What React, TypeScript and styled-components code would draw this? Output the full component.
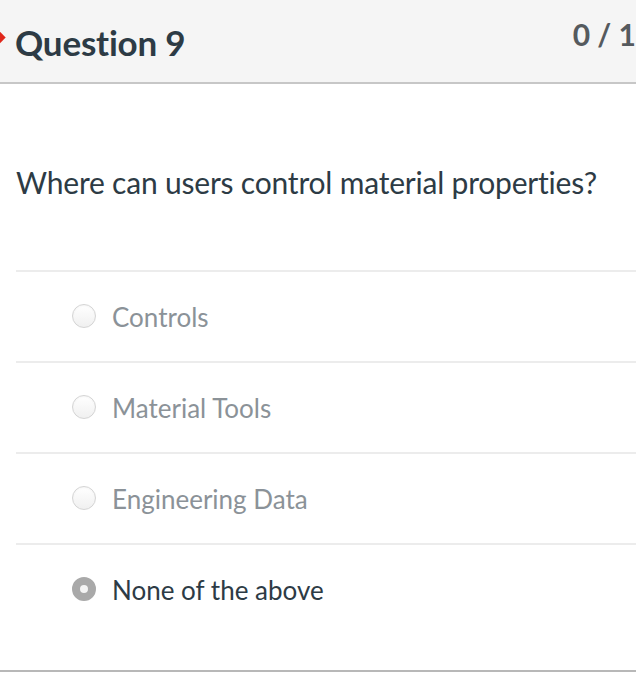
import * as React from 'react';
import styled, { createGlobalStyle } from 'styled-components';

const GlobalStyle = createGlobalStyle`
  html, body {
    margin: 0;
    padding: 0;
    background: #ffffff;
    overflow: hidden;
  }
  body {
    font-family: Lato, "Liberation Sans", sans-serif;
    color: #2d3b45;
  }
`;

const Page = styled.div`
  width: 636px;
  height: 700px;
  overflow: hidden;
`;

const Header = styled.div`
  display: flex;
  align-items: flex-start;
  height: 82px;
  background: #f5f5f5;
  border-bottom: 2px solid #c7c7c7;
`;

const Marker = styled.span`
  flex-shrink: 0;
  width: 13px;
  height: 13px;
  margin: 31px 0 0 -10px;
  background: #e0271b;
  transform: rotate(45deg);
`;

const Title = styled.h2`
  flex: 1;
  margin: 18px 0 0 12px;
  font-size: 35px;
  font-weight: 700;
  line-height: 48px;
  color: #2d3b45;
  letter-spacing: -0.2px;
`;

const Points = styled.div`
  flex-shrink: 0;
  margin: 12px 0 0 0;
  font-size: 30px;
  font-weight: 700;
  line-height: 44px;
  color: #555a5e;
  white-space: nowrap;
`;

const Body = styled.div`
  padding: 0 0 0 16px;
  border-bottom: 2px solid #b8b8b8;
`;

const Prompt = styled.p`
  margin: 0;
  padding: 77px 0 67px;
  font-size: 30px;
  line-height: 42px;
  letter-spacing: -0.2px;
  color: #2d3b45;
`;

const AnswerList = styled.div`
  display: flex;
  flex-direction: column;
  padding-bottom: 36px;
`;

const Answer = styled.label`
  display: flex;
  align-items: center;
  gap: 16px;
  height: 89px;
  padding-left: 56px;
  border-top: 2px solid #ececec;
`;

const Radio = styled.span<{ $checked?: boolean }>`
  flex-shrink: 0;
  box-sizing: border-box;
  width: 24px;
  height: 24px;
  margin-top: -2px;
  border-radius: 50%;
  border: ${(p) => (p.$checked ? '8px solid #a9a9a9' : '1.5px solid #d4d4d4')};
  background: ${(p) =>
    p.$checked ? '#f4f4f4' : 'linear-gradient(#ffffff, #f0f0f0)'};
  box-shadow: ${(p) => (p.$checked ? 'none' : 'inset 0 1px 2px rgba(0,0,0,0.04)')};
`;

const AnswerText = styled.span<{ $checked?: boolean }>`
  font-size: 26px;
  line-height: 36px;
  color: ${(p) => (p.$checked ? '#2d3b45' : '#8b9298')};
`;

const answers = ['Controls', 'Material Tools', 'Engineering Data', 'None of the above'];
const selected = 3;

export default function App() {
  return (
    <Page>
      <GlobalStyle />
      <Header>
        <Marker />
        <Title>Question 9</Title>
        <Points>0 / 1</Points>
      </Header>
      <Body>
        <Prompt>Where can users control material properties?</Prompt>
        <AnswerList>
          {answers.map((a, i) => (
            <Answer key={a}>
              <Radio $checked={i === selected} />
              <AnswerText $checked={i === selected}>{a}</AnswerText>
            </Answer>
          ))}
        </AnswerList>
      </Body>
    </Page>
  );
}
